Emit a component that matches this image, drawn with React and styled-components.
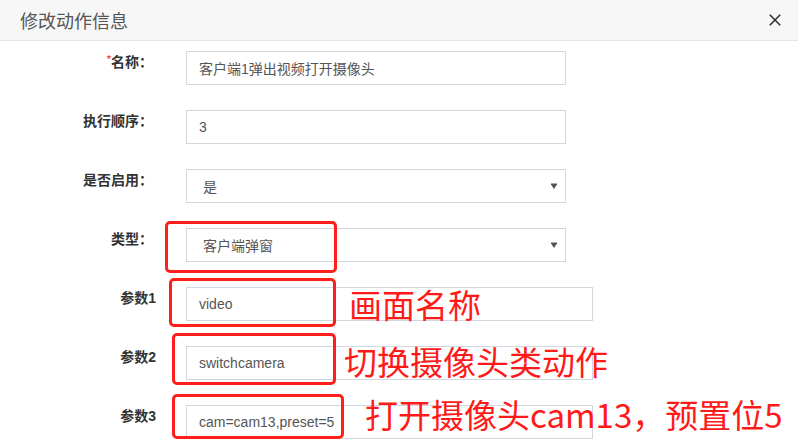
import React from "react";
import styled, { createGlobalStyle } from "styled-components";

const GlobalStyle = createGlobalStyle`
  html, body { margin: 0; padding: 0; background: #fff; }
  body { font-family: "Liberation Sans", "Noto Sans CJK SC", sans-serif; }
  * { box-sizing: border-box; }
`;

const Dialog = styled.div`
  width: 798px;
  height: 440px;
  overflow: hidden;
  background: #fff;
`;

const Header = styled.div`
  height: 41px;
  display: flex;
  align-items: center;
  justify-content: space-between;
  padding: 0 17px 1px 20px;
  background: #f7f7f7;
  border-bottom: 1px solid #e6e6e6;
`;

const Title = styled.h4`
  margin: 0;
  font-size: 18px;
  font-weight: normal;
  color: #555;
  font-family: "Liberation Sans", "Noto Sans CJK SC", sans-serif;
`;

const CloseButton = styled.button`
  width: 12px;
  height: 12px;
  padding: 0;
  border: 0;
  background: transparent;
  display: flex;
  cursor: pointer;
`;

const Form = styled.div`
  display: flex;
  flex-direction: column;
  gap: 25px;
  padding-top: 10px;
`;

const Row = styled.div`
  display: flex;
  align-items: flex-start;
`;

const Label = styled.label`
  width: 186px;
  flex: none;
  padding-right: ${(p) => (p.$plain ? 30 : 33)}px;
  padding-top: 1px;
  text-align: right;
  font-size: 14px;
  line-height: 20px;
  font-weight: bold;
  color: #333;
`;

const Required = styled.span`
  color: #f00;
  font-size: 11px;
  font-weight: normal;
  vertical-align: top;
  line-height: 14px;
`;

const Field = styled.div`
  position: relative;
  width: ${(p) => (p.$wide ? 407 : 380)}px;
`;

const TextInput = styled.div`
  height: 34px;
  display: flex;
  align-items: center;
  padding: 0 12px;
  border: 1px solid #d2d6de;
  background: #fff;
  font-size: 14px;
  color: #555;
`;

const SelectBox = styled(TextInput)`
  padding: 0 8px 0 16px;
  justify-content: space-between;
`;

const Arrow = styled.svg`
  width: 6px;
  height: 6px;
  flex: none;
`;

const Mark = styled.div`
  position: absolute;
  left: ${(p) => p.$left}px;
  top: ${(p) => p.$top}px;
  width: ${(p) => p.$w}px;
  height: ${(p) => p.$h}px;
  border: 3px solid #ff1f1a;
  border-radius: 5px;
  pointer-events: none;
`;

const Note = styled.div`
  position: absolute;
  left: ${(p) => p.$x}px;
  top: 50%;
  margin-top: ${(p) => p.$dy}px;
  transform: translateY(-50%);
  white-space: nowrap;
  font-family: "Noto Sans CJK SC", sans-serif;
  font-size: 33px;
  line-height: 1;
  color: #ff1a1a;
  pointer-events: none;
`;

const SelectArrow = () => (
  <Arrow viewBox="0 0 6 6">
    <path d="M0 0.5 H6 V1.5 L3 6 L0 1.5 Z" fill="#555" />
  </Arrow>
);

export default function App() {
  return (
    <>
      <GlobalStyle />
      <Dialog>
        <Header>
          <Title>修改动作信息</Title>
          <CloseButton aria-label="close">
            <svg width="12" height="12" viewBox="0 0 12 12">
              <path d="M0.8 0.8 L11.2 11.2 M11.2 0.8 L0.8 11.2" stroke="#333" strokeWidth="1.6" />
            </svg>
          </CloseButton>
        </Header>
        <Form>
          <Row>
            <Label>
              <Required>*</Required>名称：
            </Label>
            <Field>
              <TextInput>客户端1弹出视频打开摄像头</TextInput>
            </Field>
          </Row>
          <Row>
            <Label>执行顺序：</Label>
            <Field>
              <TextInput>3</TextInput>
            </Field>
          </Row>
          <Row>
            <Label>是否启用：</Label>
            <Field>
              <SelectBox>
                是
                <SelectArrow />
              </SelectBox>
            </Field>
          </Row>
          <Row>
            <Label>类型：</Label>
            <Field>
              <SelectBox>
                客户端弹窗
                <SelectArrow />
              </SelectBox>
              <Mark $left={-21} $top={-7} $w={172} $h={52} />
            </Field>
          </Row>
          <Row>
            <Label $plain>参数1</Label>
            <Field $wide>
              <TextInput>video</TextInput>
              <Mark $left={-17} $top={-9} $w={167} $h={49} />
              <Note $x={163} $dy={0}>画面名称</Note>
            </Field>
          </Row>
          <Row>
            <Label $plain>参数2</Label>
            <Field $wide>
              <TextInput>switchcamera</TextInput>
              <Mark $left={-14} $top={-13} $w={164} $h={52} />
              <Note $x={158} $dy={-2}>切换摄像头类动作</Note>
            </Field>
          </Row>
          <Row>
            <Label $plain>参数3</Label>
            <Field $wide>
              <TextInput>cam=cam13,preset=5</TextInput>
              <Mark $left={-14} $top={-11} $w={172} $h={45} />
              <Note $x={179} $dy={-8}>打开摄像头cam13，预置位5</Note>
            </Field>
          </Row>
        </Form>
      </Dialog>
    </>
  );
}
